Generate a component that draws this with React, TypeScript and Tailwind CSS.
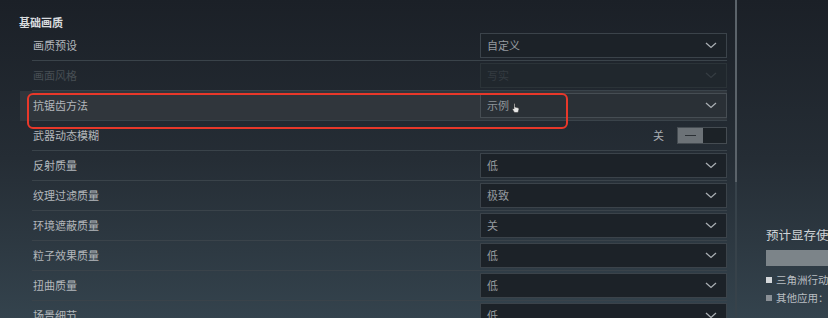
import React from "react";

type Row = {
  label: string;
  kind: "select" | "toggle";
  value?: string;
  disabled?: boolean;
  highlight?: boolean;
};

const rows: Row[] = [
  { label: "画质预设", kind: "select", value: "自定义" },
  { label: "画面风格", kind: "select", value: "写实", disabled: true },
  { label: "抗锯齿方法", kind: "select", value: "示例", highlight: true },
  { label: "武器动态模糊", kind: "toggle", value: "关" },
  { label: "反射质量", kind: "select", value: "低" },
  { label: "纹理过滤质量", kind: "select", value: "极致" },
  { label: "环境遮蔽质量", kind: "select", value: "关" },
  { label: "粒子效果质量", kind: "select", value: "低" },
  { label: "扭曲质量", kind: "select", value: "低" },
  { label: "场景细节", kind: "select", value: "低" },
];

function Chevron({ dim }: { dim?: boolean }) {
  return (
    <svg width="12" height="7" viewBox="0 0 12 7" className="mr-[9px]">
      <path
        d="M1 1 L6 5.5 L11 1"
        fill="none"
        stroke={dim ? "#353c42" : "#a9aeb3"}
        strokeWidth="1.3"
      />
    </svg>
  );
}

function Cursor() {
  return (
    <svg width="8" height="10" viewBox="0 0 8 10" className="ml-[3px] mt-[4px]">
      <path
        d="M2 0.5 L3 0.5 L3 4 L6.5 5 L7 6 L6 9.5 L2.5 9.5 L0.5 6.5 L1 5.5 L2 6 Z"
        fill="#e8e8e8"
        stroke="#333"
        strokeWidth="0.5"
      />
    </svg>
  );
}

function Select({ value, disabled, highlight }: { value: string; disabled?: boolean; highlight?: boolean }) {
  const cls = disabled
    ? "bg-[#20272d] border-[#2b3338] text-[#343b41]"
    : highlight
    ? "bg-[#2a3036] border-[#464d53] text-[#8f959a]"
    : "bg-[#1c2228] border-[#3b434a] text-[#959a9f]";
  return (
    <div className={`w-[247px] h-[25px] border flex items-center justify-between pl-[6px] ${cls}`}>
      <div className="flex items-center text-[11px]">
        <span>{value}</span>
        {highlight && <Cursor />}
      </div>
      <Chevron dim={disabled} />
    </div>
  );
}

function Toggle({ value }: { value: string }) {
  return (
    <div className="flex items-center">
      <span className="text-[11px] text-[#a9aeb3] mr-[13px]">{value}</span>
      <div className="w-[50px] h-[17px] border border-[#454c52] bg-[#1c2227] flex">
        <div className="w-[25px] h-full bg-[#6c7277] flex items-center justify-center">
          <div className="w-[11px] h-[1.5px] bg-[#2b3035]" />
        </div>
      </div>
    </div>
  );
}

export default function App() {
  return (
    <div
      className="relative w-[828px] h-[318px] overflow-hidden bg-gradient-to-b from-[#1b2027] via-[#252d35] to-[#34434d] flex"
      style={{ fontFamily: '"Noto Sans CJK SC", "Noto Sans", sans-serif' }}
    >
      {/* left settings column */}
      <div className="w-[735px] shrink-0">
        <div className="pl-[19px] pt-[15px] h-[31px] text-[11px] font-bold text-[#d9dcdf] leading-[14px]">
          基础画质
        </div>
        <div className="ml-[20px] w-[707px]">
          {rows.map((r) => (
            <div
              key={r.label}
              className={`h-[30px] pl-[12px] ${r.highlight ? "bg-[#30363c]" : ""}`}
            >
              <div className="h-full flex items-center justify-between border-b border-[#3a434a]">
                <span
                  className={`pl-px text-[11px] ${
                    r.disabled ? "text-[#474e54]" : "text-[#b3b7bb]"
                  }`}
                >
                  {r.label}
                </span>
                {r.kind === "select" ? (
                  <Select value={r.value!} disabled={r.disabled} highlight={r.highlight} />
                ) : (
                  <Toggle value={r.value!} />
                )}
              </div>
            </div>
          ))}
        </div>
      </div>

      {/* scrollbar */}
      <div className="w-[3px] shrink-0 flex flex-col">
        <div className="h-[182px] w-[2px] bg-[#5b636a]" />
        <div className="flex-1 w-[2px] bg-[#37424a]" />
      </div>

      {/* right panel */}
      <div className="flex-1 pl-[28px] pt-[226px] whitespace-nowrap">
        <div className="text-[12.5px] text-[#cfd3d6] leading-[18px]">预计显存使用</div>
        <div className="mt-[6px] h-[16px] w-[80px] bg-[#7c8489]" />
        <div className="mt-[7px] flex items-center text-[10.5px] text-[#b9bec2] leading-[14px]">
          <span className="w-[6px] h-[6px] bg-[#d4d7da] mr-[4px]" />
          三角洲行动
        </div>
        <div className="mt-[4px] flex items-center text-[10.5px] text-[#b9bec2] leading-[14px]">
          <span className="w-[6px] h-[6px] bg-[#8a9096] mr-[4px]" />
          其他应用：
        </div>
      </div>

      {/* red annotation box */}
      <div className="absolute left-[27px] top-[93px] w-[541px] h-[36px] border-[2.5px] border-[#e8382a] rounded-[6px]" />
    </div>
  );
}
